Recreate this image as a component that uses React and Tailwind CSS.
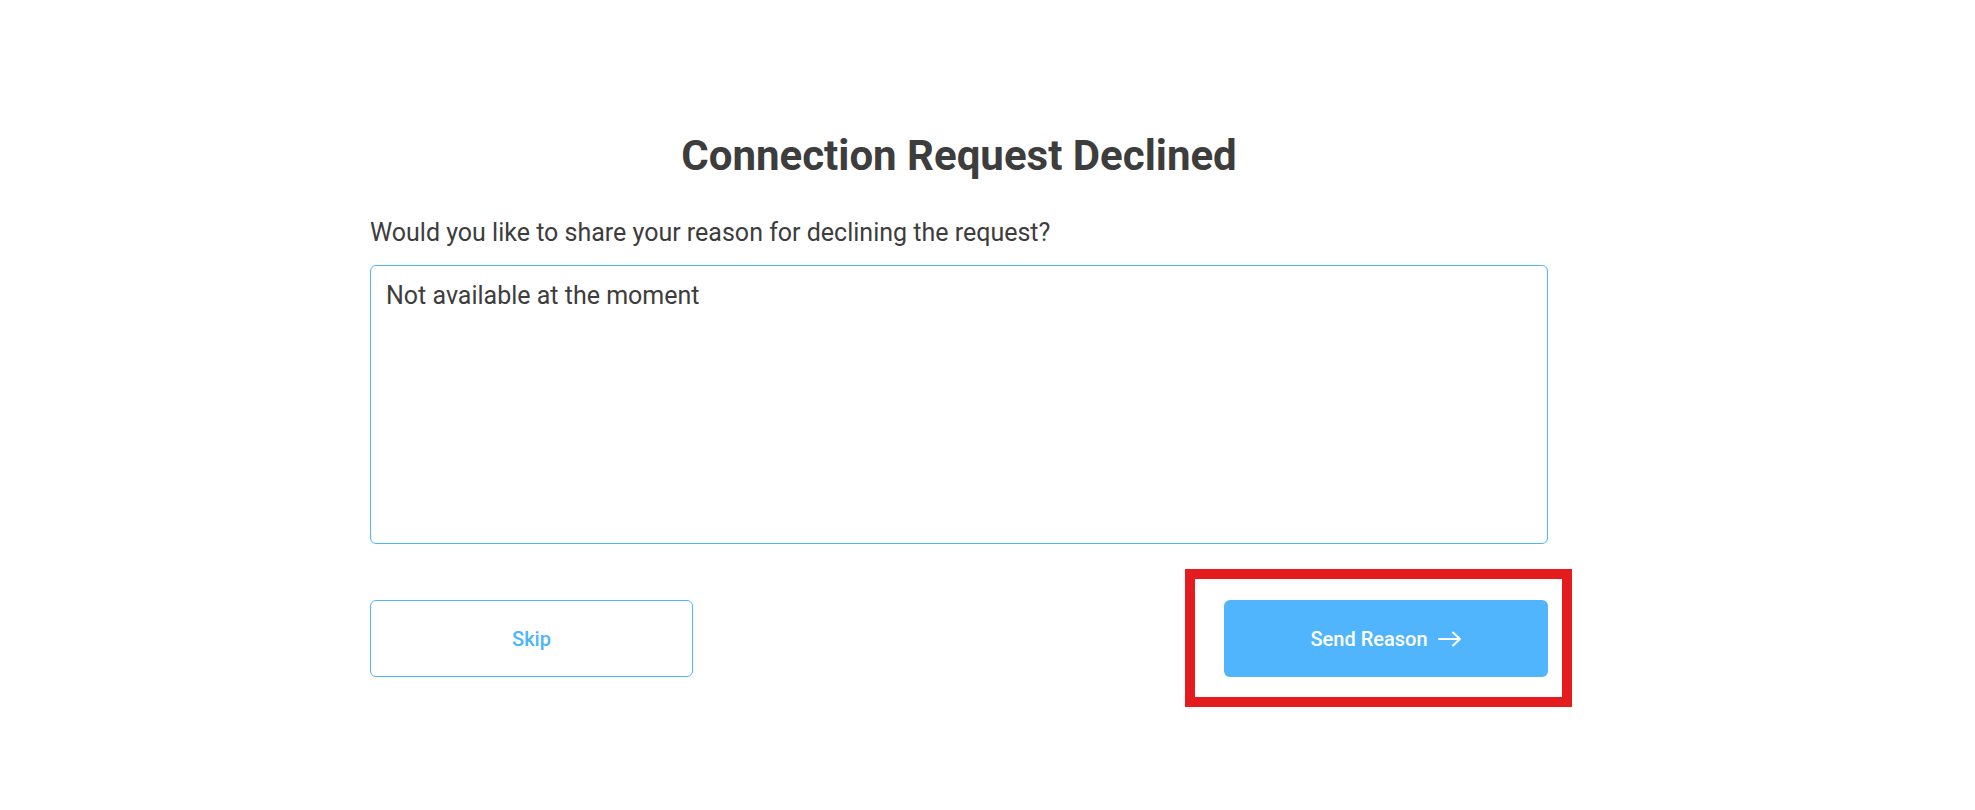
import { useState } from 'react';

const ArrowRight = () => (
  <svg width="24" height="16" viewBox="0 0 24 16" fill="none" stroke="currentColor" strokeWidth={2} strokeLinecap="round" strokeLinejoin="round">
    <path d="M1 8h21M15 1.5L22 8l-7 6.5" />
  </svg>
);

const App = () => {
  const [reason, setReason] = useState('Not available at the moment');

  return (
    <div className="min-h-[810px] w-full bg-white font-['Roboto',sans-serif] text-[#3d3d3d]">
      <div className="ml-[370px] w-[1178px] pt-[131px]">
        <h1 className="text-center text-[42px] leading-[50px] font-bold text-[#3d3d3d]">
          Connection Request Declined
        </h1>
        <p className="mt-[37px] text-[25px] leading-[30px]">
          Would you like to share your reason for declining the request?
        </p>
        <textarea
          value={reason}
          onChange={(e) => setReason(e.target.value)}
          className="mt-[17px] block h-[279px] w-full resize-none rounded-[6px] border border-[#4db4ff] px-[15px] py-[15px] text-[25px] leading-[30px] text-[#3d3d3d] outline-none"
        />
        <div className="mt-[56px] flex justify-between">
          <button className="h-[77px] w-[323px] rounded-[6px] border border-[#4db4ff] bg-white text-[20px] font-medium text-[#4db4ff]">
            Skip
          </button>
          <div className="relative">
            <button className="flex h-[77px] w-[324px] items-center justify-center gap-[10px] rounded-[6px] bg-[#51b5fe] text-[20px] font-medium text-white">
              Send Reason
              <ArrowRight />
            </button>
            <div className="pointer-events-none absolute -left-[39px] -top-[31px] h-[138px] w-[387px] border-[10px] border-[#e41b1f]" />
          </div>
        </div>
      </div>
    </div>
  );
};

export default App;
